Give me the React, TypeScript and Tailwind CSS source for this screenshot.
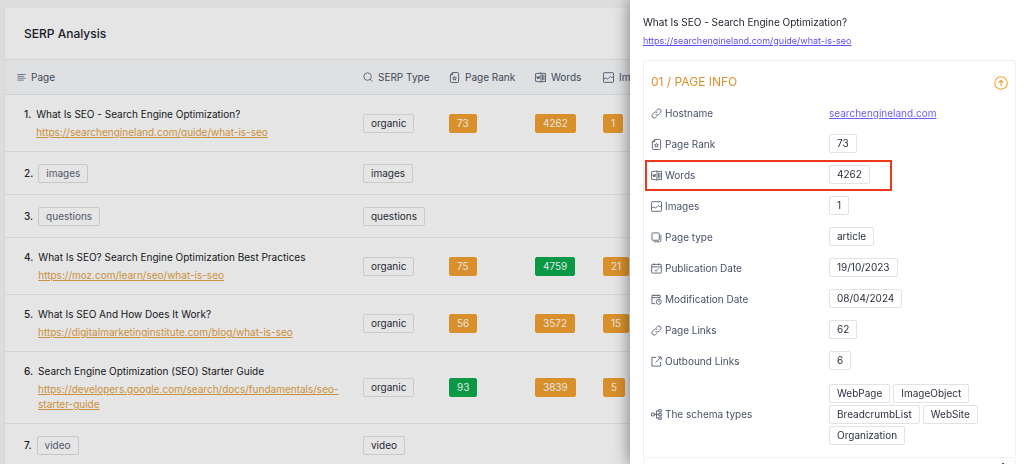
import React from 'react';

type IconName =
  | 'lines' | 'search' | 'rank' | 'words' | 'image' | 'link' | 'layers'
  | 'calCheck' | 'calClock' | 'external' | 'schema' | 'up';

const shapes: Record<IconName, React.ReactNode> = {
  lines: <path d="M1 4h22M1 9h17M1 14h22M1 19h17" />,
  search: (<><circle cx="11" cy="11" r="9" /><path d="M17.500 17.500l5 5" /></>),
  rank: (
    <>
      <path d="M8 1h10a3 3 0 0 1 3 3v16a3 3 0 0 1-3 3H6a3 3 0 0 1-3-3V6zM8 1v5H3" />
      <path d="M12 9.500l1.300 2.700 2.900.4-2.100 2 .5 2.900-2.600-1.400-2.600 1.400.5-2.900-2.100-2 2.900-.4z" />
    </>
  ),
  words: (
    <>
      <path d="M1 4l12-2v20L1 20zM13 3h10v18H13M16.500 6v12M19.500 6v12" />
      <path d="M4 9l1.500 6L7 10l1.500 5L10 9" />
    </>
  ),
  image: (<><rect x="1" y="1.500" width="22" height="21" rx="1.500" /><path d="M1 16l5-3 4 2.500 6-6 2.500 2.500L23 11" /></>),
  link: (
    <>
      <path d="M10 14a5 5 0 0 0 7 0l4-4a5 5 0 0 0-7-7l-3 3" />
      <path d="M14 10a5 5 0 0 0-7 0l-4 4a5 5 0 0 0 7 7l3-3" />
    </>
  ),
  layers: (<><rect x="2" y="2" width="16" height="16" rx="2" /><path d="M21.500 6v12a3.500 3.500 0 0 1-3.500 3.500H6" /></>),
  calCheck: (
    <>
      <rect x="1.500" y="3" width="21" height="19" rx="1.500" />
      <path d="M1.500 8.500h21M7 1v4M17 1v4M8 15l3 3 6-6" />
    </>
  ),
  calClock: (
    <>
      <path d="M9 21H2V3h18v6M2 8h18M7 1v4M15 1v4" />
      <circle cx="17" cy="17" r="5.500" />
      <path d="M17 14v3h2.500" />
    </>
  ),
  external: (<><path d="M11 3H2v19h19v-9M15 2h7v7M22 2L10 14" /></>),
  schema: (
    <>
      <rect x="1" y="9" width="6" height="6" />
      <rect x="17" y="1.500" width="5.500" height="5" />
      <rect x="17" y="9.500" width="5.500" height="5" />
      <rect x="17" y="17.500" width="5.500" height="5" />
      <path d="M7 12h10M17 4h-5v16h5" />
    </>
  ),
  up: (<><circle cx="12" cy="12" r="10.800" /><path d="M12 17V8M8 11.500l4-4 4 4" /></>),
};

function Icon({ name, className = 'size-[11px]' }: { name: IconName; className?: string }) {
  return (
    <svg
      viewBox="0 0 24 24"
      fill="none"
      stroke="currentColor"
      strokeWidth="1.8"
      strokeLinejoin="round"
      aria-hidden="true"
      className={`shrink-0 ${className}`}
    >
      {shapes[name]}
    </svg>
  );
}

type Tone = 'plain' | 'muted' | 'orange' | 'green';

const tones: Record<Tone, string> = {
  plain: 'border-[#e2e2e4] text-[#2b3040]',
  muted: 'border-[#dddee0] text-[#5d6478]',
  orange: 'border-[#f2a130] bg-[#f2a130] text-white',
  green: 'border-[#0bab4d] bg-[#0bab4d] text-white',
};

function Tag({ children, tone = 'plain' }: { children: React.ReactNode; tone?: Tone }) {
  return (
    <span className={`inline-flex h-[19px] items-center rounded-[2px] border px-[7px] whitespace-nowrap ${tones[tone]}`}>
      {children}
    </span>
  );
}

type Row = {
  title?: string;
  url?: string;
  type: string;
  rank?: [number, Tone];
  words?: [number, Tone];
  images?: [number, Tone];
};

const rows: Row[] = [
  { title: 'What Is SEO - Search Engine Optimization?', url: 'https://searchengineland.com/guide/what-is-seo', type: 'organic', rank: [73, 'orange'], words: [4262, 'orange'], images: [1, 'orange'] },
  { type: 'images' },
  { type: 'questions' },
  { title: 'What Is SEO? Search Engine Optimization Best Practices', url: 'https://moz.com/learn/seo/what-is-seo', type: 'organic', rank: [75, 'orange'], words: [4759, 'green'], images: [21, 'orange'] },
  { title: 'What Is SEO And How Does It Work?', url: 'https://digitalmarketinginstitute.com/blog/what-is-seo', type: 'organic', rank: [56, 'orange'], words: [3572, 'orange'], images: [15, 'orange'] },
  { title: 'Search Engine Optimization (SEO) Starter Guide', url: 'https://developers.google.com/search/docs/fundamentals/seo-starter-guide', type: 'organic', rank: [93, 'green'], words: [3839, 'orange'], images: [5, 'orange'] },
  { type: 'video' },
];

const columns: { label: string; icon: IconName; width: string; size: string }[] = [
  { label: 'Page', icon: 'lines', width: 'w-[346px]', size: 'size-[9px]' },
  { label: 'SERP Type', icon: 'search', width: 'w-[86px]', size: 'size-[10px]' },
  { label: 'Page Rank', icon: 'rank', width: 'w-[86px]', size: 'size-[11px]' },
  { label: 'Words', icon: 'words', width: 'w-[68px]', size: 'size-[11px]' },
  { label: 'Images', icon: 'image', width: 'w-[438px]', size: 'size-[11px]' },
];

function Metric({ value }: { value?: [number, Tone] }) {
  return <td className="pl-3">{value && <Tag tone={value[1]}>{value[0]}</Tag>}</td>;
}

function SerpTable() {
  return (
    <section className="ml-1 mt-2 border-l border-[#efeff0] bg-white">
      <h1 className="flex h-[51px] items-center pl-[19px] text-xs font-medium text-[#20242f]">SERP Analysis</h1>
      <table className="w-[1024px] table-fixed border-collapse text-left">
        <thead>
          <tr className="h-[35px] border-y border-[#e6eaee] bg-[#f8fafc] text-[#475067]">
            {columns.map((c) => (
              <th key={c.label} scope="col" className={`pl-3 font-normal ${c.width}`}>
                <span className="flex items-center gap-[5px]">
                  <Icon name={c.icon} className={c.size} />
                  {c.label}
                </span>
              </th>
            ))}
          </tr>
        </thead>
        <tbody>
          {rows.map((r, i) => (
            <tr key={i} className="border-b border-[#ededef]">
              <td className="pl-[19px] align-top">
                <div className={`flex ${r.title ? 'gap-[5px] pt-3 pb-[11px]' : 'h-[42px] items-center gap-[5px]'}`}>
                  <span className="font-medium leading-[15px] text-[#20242f]">{i + 1}.</span>
                  {r.title ? (
                    <div className="flex w-[306px] flex-col gap-[3px] leading-[15px]">
                      <span className="text-[#161a24]">{r.title}</span>
                      <a href={r.url} className="text-[#e3a243] underline">{r.url}</a>
                    </div>
                  ) : (
                    <Tag tone="muted">{r.type}</Tag>
                  )}
                </div>
              </td>
              <td className="pl-3"><Tag>{r.type}</Tag></td>
              <Metric value={r.rank} />
              <Metric value={r.words} />
              <Metric value={r.images} />
            </tr>
          ))}
        </tbody>
      </table>
    </section>
  );
}

const details: { label: string; icon: IconName; value: string; marked?: boolean }[] = [
  { label: 'Page Rank', icon: 'rank', value: '73' },
  { label: 'Words', icon: 'words', value: '4262', marked: true },
  { label: 'Images', icon: 'image', value: '1' },
  { label: 'Page type', icon: 'layers', value: 'article' },
  { label: 'Publication Date', icon: 'calCheck', value: '19/10/2023' },
  { label: 'Modification Date', icon: 'calClock', value: '08/04/2024' },
  { label: 'Page Links', icon: 'link', value: '62' },
  { label: 'Outbound Links', icon: 'external', value: '6' },
];

function DetailLabel({ icon, children }: { icon: IconName; children: string }) {
  return (
    <dt className="flex w-[178px] shrink-0 items-center gap-[3px] text-[#475067]">
      <Icon name={icon} />
      {children}
    </dt>
  );
}

function Drawer() {
  return (
    <aside className="fixed inset-y-0 right-0 w-[394px] overflow-hidden bg-white pl-[13px] pr-2 shadow-[0_0_16px_rgba(0,0,0,0.5)]">
      <h2 className="mt-[14px] leading-4 text-[#20242f]">What Is SEO - Search Engine Optimization?</h2>
      <a href="https://searchengineland.com/guide/what-is-seo" className="mt-[3px] block text-[9px] leading-4 text-[#5a50ee] underline">
        https://searchengineland.com/guide/what-is-seo
      </a>
      <div className="mt-[11px] rounded-t border border-b-0 border-[#f0f0f2] px-[7px]">
        <div className="flex h-[37px] items-end justify-between pb-2">
          <h3 className="text-xs leading-4 font-normal text-[#dc902d]">01 / PAGE INFO</h3>
          <button type="button" aria-label="Collapse page info" className="text-[#f2a130]">
            <Icon name="up" className="size-[14px]" />
          </button>
        </div>
        <dl>
          <div className="flex h-[31px] items-center">
            <DetailLabel icon="link">Hostname</DetailLabel>
            <dd><a href="https://searchengineland.com" className="text-[#6a60f0] underline">searchengineland.com</a></dd>
          </div>
          {details.map((d) => (
            <div
              key={d.label}
              className={`flex h-[31px] items-center ${d.marked ? '-ml-[6px] mr-[116px] border-2 border-[#f0371a] pl-1' : ''}`}
            >
              <DetailLabel icon={d.icon}>{d.label}</DetailLabel>
              <dd className="pb-[2px]"><Tag>{d.value}</Tag></dd>
            </div>
          ))}
          <div className="flex items-center pt-[7px] pb-3">
            <DetailLabel icon="schema">The schema types</DetailLabel>
            <dd className="flex flex-wrap gap-x-[3px] gap-y-[2px]">
              {['WebPage', 'ImageObject', 'BreadcrumbList', 'WebSite', 'Organization'].map((s) => <Tag key={s}>{s}</Tag>)}
            </dd>
          </div>
        </dl>
      </div>
      <div className="flex h-10 justify-end rounded-t border border-[#f0f0f2] px-[5px] pt-1">
        <button type="button" aria-label="Expand next section" className="h-[14px] text-[#475067]">
          <svg viewBox="0 0 14 14" fill="none" stroke="currentColor" aria-hidden="true" className="size-[14px]">
            <path d="M3 5l4-4 4 4" />
          </svg>
        </button>
      </div>
    </aside>
  );
}

export default function App() {
  return (
    <main className="flow-root h-screen overflow-hidden bg-[#f6f6f6] font-[Inter,sans-serif] text-[10px]">
      <SerpTable />
      <div className="fixed inset-0 bg-black/10" />
      <Drawer />
    </main>
  );
}
